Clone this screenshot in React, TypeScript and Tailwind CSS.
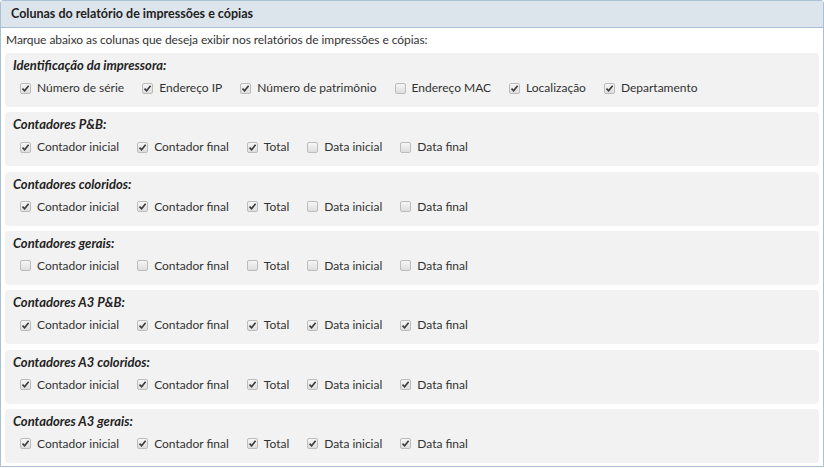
const groups: { title: string; items: [string, boolean][] }[] = [
  {
    title: "Identificação da impressora:",
    items: [
      ["Número de série", true],
      ["Endereço IP", true],
      ["Número de patrimônio", true],
      ["Endereço MAC", false],
      ["Localização", true],
      ["Departamento", true],
    ],
  },
  { title: "Contadores P&B:", items: counters([true, true, true, false, false]) },
  { title: "Contadores coloridos:", items: counters([true, true, true, false, false]) },
  { title: "Contadores gerais:", items: counters([false, false, false, false, false]) },
  { title: "Contadores A3 P&B:", items: counters([true, true, true, true, true]) },
  { title: "Contadores A3 coloridos:", items: counters([true, true, true, true, true]) },
  { title: "Contadores A3 gerais:", items: counters([true, true, true, true, true]) },
];

function counters(v: boolean[]): [string, boolean][] {
  const names = ["Contador inicial", "Contador final", "Total", "Data inicial", "Data final"];
  return names.map((n, i) => [n, v[i]]);
}

function Box({ checked }: { checked: boolean }) {
  return (
    <span className="w-[11px] h-[11px] rounded-[2px] border border-[#bcbcbc] bg-gradient-to-b from-[#f6f6f6] to-[#dedede] flex items-center justify-center shrink-0">
      {checked && (
        <svg width="9" height="9" viewBox="0 0 9 9">
          <path d="M1.5 4.6 L3.6 6.8 L7.6 1.8" fill="none" stroke="#3a3a3a" strokeWidth="1.6" />
        </svg>
      )}
    </span>
  );
}

export default function App() {
  return (
    <div className="w-[824px] h-[468px] bg-white text-[12px] text-[#333] font-['Lato','Liberation_Sans',sans-serif]">
      <div className="border border-[#aac0d6] rounded-t-[3px] h-[467px]">
        <div className="h-[27px] bg-[#dce4ec] border-b border-[#aac0d6] px-[10px] flex items-center font-bold text-[12.5px] text-[#222]">
          Colunas do relatório de impressões e cópias
        </div>
        <div className="px-[4px] pt-[4px]">
          <p className="leading-[16px] pl-[1px] mb-[5px] tracking-[-0.07px]">
            Marque abaixo as colunas que deseja exibir nos relatórios de impressões e cópias:
          </p>
          <div className="flex flex-col gap-[5.33px]">
            {groups.map((g) => (
              <div key={g.title} className="bg-[#f2f2f2] rounded-[4px] pt-[4px] pb-[11px] px-[8px]">
                <div className="leading-[16px] font-bold italic text-[13px] text-[#222]">{g.title}</div>
                <div className="mt-[7px] flex gap-[18px] pl-[7px] leading-[16px]">
                  {g.items.map(([label, checked]) => (
                    <label key={label} className="flex items-center gap-[6px]">
                      <Box checked={checked} />
                      <span>{label}</span>
                    </label>
                  ))}
                </div>
              </div>
            ))}
          </div>
        </div>
      </div>
    </div>
  );
}
